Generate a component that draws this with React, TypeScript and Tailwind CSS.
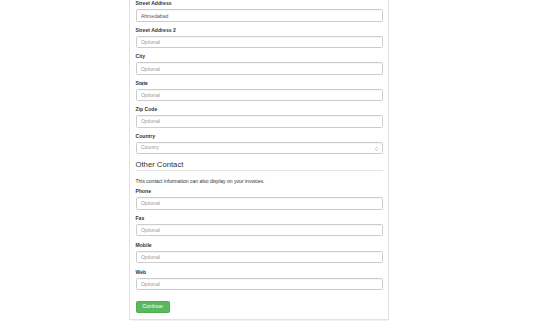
import React from 'react';

interface Field {
  label: string;
  value?: string;
}

const addressFields: Field[] = [
  { label: 'Street Address', value: 'Ahmedabad' },
  { label: 'Street Address 2' },
  { label: 'City' },
  { label: 'State' },
  { label: 'Zip Code' },
];

const contactFields: Field[] = [
  { label: 'Phone' },
  { label: 'Fax' },
  { label: 'Mobile' },
  { label: 'Web' },
];

function FormGroup({ label, value, gap }: Field & { gap: string }) {
  return (
    <div className={gap}>
      <label className="block text-[5.1px] leading-[7.2px] font-bold text-[#333] mb-[1.8px]">{label}</label>
      <input
        className="block w-full h-[12.3px] px-[4.4px] text-[5.1px] text-[#555] placeholder:text-[#999] bg-white border border-[#ccc] rounded-[1.5px] shadow-[inset_0_0.4px_0.4px_rgba(0,0,0,0.075)] outline-none"
        placeholder="Optional"
        defaultValue={value}
      />
    </div>
  );
}

export default function App() {
  return (
    <div className="min-h-[324px] bg-white font-['Liberation_Sans',Arial,sans-serif] overflow-hidden">
      <div className="ml-[129px] w-[260px] -mt-[10px] pt-[9.4px] pb-[5.6px] px-[5.5px] bg-white border border-[#e2e2e2] shadow-[0_0.5px_1px_rgba(0,0,0,0.05)]">
        {addressFields.map((f) => (
          <FormGroup key={f.label} gap="mb-[5.2px]" {...f} />
        ))}

        {/* Country select */}
        <div className="mb-[5.2px]">
          <label className="block text-[5.1px] leading-[7.2px] font-bold text-[#333] mb-[1.8px]">Country</label>
          <div className="relative h-[12.3px] flex items-center px-[4.4px] bg-white border border-[#ccc] rounded-[1.5px] shadow-[inset_0_0.4px_0.4px_rgba(0,0,0,0.075)]">
            <span className="text-[5.1px] text-[#999]">Country</span>
            <svg className="absolute right-[4px] top-[4px] w-[3px] h-[4px]" viewBox="0 0 6 8">
              <path d="M1 3 L3 1 L5 3 M1 5 L3 7 L5 5" fill="none" stroke="#777" strokeWidth="1" />
            </svg>
          </div>
        </div>

        {/* Other Contact (margins collapse with the group above) */}
        <div className="mt-[6.3px] text-[7.7px] leading-[9.5px] text-[#333] border-b border-[#e5e5e5]">Other Contact</div>
        <p className="mt-[6.6px] mb-[3.6px] text-[5px] leading-[7.2px] text-[#333]">
          This contact information can also display on your invoices.
        </p>

        {contactFields.map((f) => (
          <FormGroup key={f.label} gap="mb-[5.5px]" {...f} />
        ))}

        <button className="mt-[10.8px] w-[34px] h-[12.4px] flex items-center justify-center text-[5.1px] text-white bg-[#5cb85c] border border-[#4cae4c] rounded-[1.5px]">
          Continue
        </button>
      </div>
    </div>
  );
}
